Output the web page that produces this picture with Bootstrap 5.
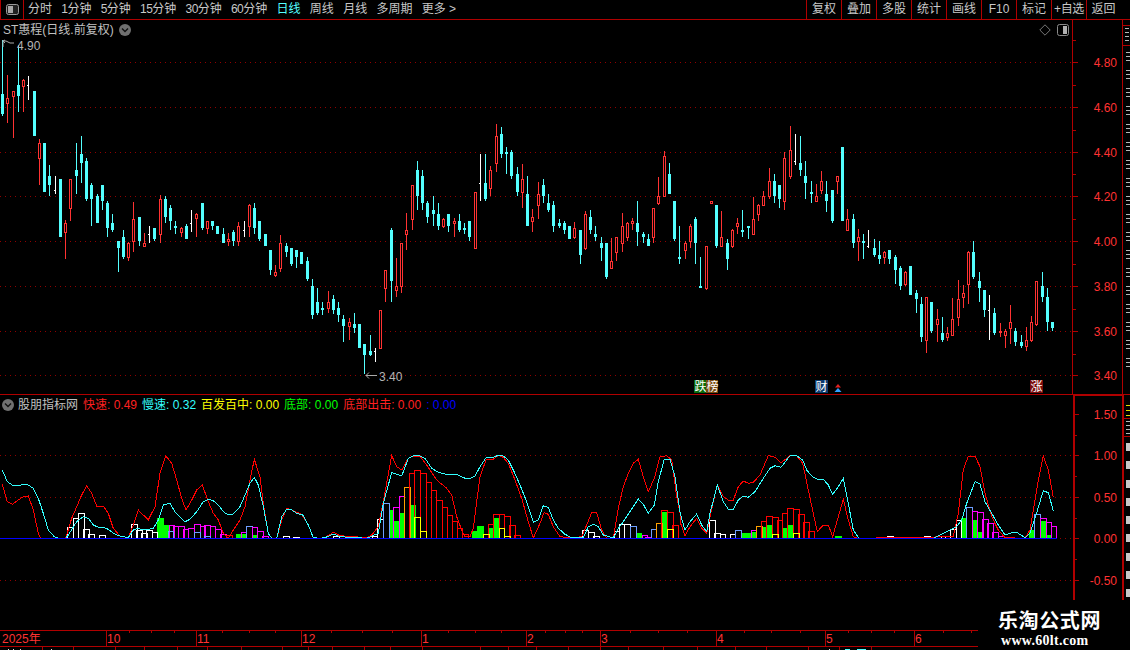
<!DOCTYPE html>
<html lang="zh-CN">
<head>
  <meta charset="UTF-8" />
  <meta name="viewport" content="width=device-width, initial-scale=1.0"/>
  <title>ST惠程 日线</title>
  <link href="https://cdn.jsdelivr.net/npm/bootstrap@5.3.3/dist/css/bootstrap.min.css" rel="stylesheet">
  <style>
    body { background: #000; overflow: hidden; }

    .chart-app {
      width: 1130px;
      height: 650px;
      overflow: hidden;
      background: #000;
      color: #c0c0c0;
      font: 12px/1 "Liberation Sans", "Noto Sans CJK SC", sans-serif;
    }

    .chart-app svg { display: block; flex-shrink: 0; }
    .chart-app svg text { font-family: "Liberation Sans", "Noto Sans CJK SC", sans-serif; font-size: 12px; }

    /* top toolbar */
    .tool-bar { height: 20px; border-bottom: 1px solid #b00000; }
    .tool-icon { width: 24px; height: 19px; border-left: 1px solid #b00000; border-right: 1px solid #b00000; }
    .tool-link { padding: 0; color: #c8c8c8; font-size: 12px; line-height: 19px; white-space: nowrap; }
    .tool-link:hover { color: #fff; }
    .tool-link.is-active { color: #54ffff; }
    .tool-links { margin-left: 4px; gap: 9.3px; }
    .tool-link .dg { letter-spacing: -.6px; }
    .tool-btn {
      width: 35px;
      height: 19px;
      padding: 0;
      border-left: 1px solid #b00000;
      color: #c8c8c8;
      font-size: 12px;
      line-height: 19px;
      text-align: center;
      white-space: nowrap;
    }
    .tool-btn.narrow { letter-spacing: -.3px; }
    .tool-btn:last-child { width: 44px; padding-right: 10px; }

    /* panes */
    .main-pane { height: 375px; border-bottom: 1px solid #b00000; }
    .sub-pane { height: 235px; }
    .plot-main { width: 1072px; }
    .plot-sub { width: 1073px; }
    .pane-head { height: 18px; padding: 2px 0 0 3px; white-space: nowrap; color: #c0c0c0; }
    .round-btn {
      width: 12px;
      height: 12px;
      border-radius: 50%;
      background: #707070;
      margin-left: 5px;
    }
    .head-icons { gap: 6px; margin-right: 2px; }
    .axis-main { width: 51px; border-left: 1px solid #b00000; border-right: 1px solid #b00000; }
    .axis-sub { width: 51px; border-left: 2px solid #b00000; border-right: 2px solid #b00000; border-top: 1px solid #b00000; }

    /* legend of the sub chart */
    .legend-row { height: 17px; padding-top: 3px; white-space: nowrap; gap: 5px; }
    .legend-row .round-btn { margin: 0 -1px 0 2px; }
    .legend-name { width: 60px; color: #c0c0c0; }
    .lg-red { color: #ff2020; }
    .lg-cyan { color: #33ffff; }
    .lg-yellow { color: #ffff00; }
    .lg-green { color: #00ff00; }
    .lg-blue { color: #0000ff; }

    /* column at the right edge: only slivers of its labels are on screen */
    .side-strip { flex: 1 1 auto; overflow: hidden; }
    .side-cell {
      border-bottom: 1px solid #b00000;
      background: repeating-linear-gradient(#b8b8b8 0 1px, transparent 1px 4px) 2px 2px / 4px 15px no-repeat;
    }
    .side-top { height: 21px; margin-top: 5px; border-top: 1px solid #b00000; }
    .side-yellow {
      height: 24px;
      background: repeating-linear-gradient(#e0e000 0 1px, transparent 1px 5px) 2px 10px / 4px 12px no-repeat;
    }
    .side-gray { height: 18px; }
    .side-dashes {
      height: 329px;
      background: repeating-linear-gradient(#b8b8b8 0 1px, transparent 1px 4px, #b8b8b8 4px 5px, transparent 5px 8px, #b8b8b8 8px 9px, transparent 9px 18px) 3px 6px / 4px 100% no-repeat;
    }
    .side-blocks {
      height: 200px;
      background: repeating-linear-gradient(#c8c8c8 0 8px, transparent 8px 18.3px) 2px 6px / 4px 100% no-repeat;
    }

    /* watermark over the corner */
    .mark-wrap { position: relative; }
    .water-mark {
      position: absolute;
      right: 0;
      bottom: 0;
      width: 152px;
      height: 50px;
      padding: 9px 0 0 20px;
      background: #000;
      color: #fff;
    }
    .water-name { font: 700 20px/22px "Noto Sans CJK SC", sans-serif; letter-spacing: .6px; }
    .water-url { font: 700 14px/15px "Liberation Serif", serif; margin: 2px 0 0 3px; letter-spacing: .3px; }
  </style>
</head>
<body>
  <div class="chart-app mark-wrap d-flex flex-column">

    <header class="tool-bar d-flex">
      <div class="tool-icon d-flex align-items-center justify-content-center">
        <svg width="13" height="11" viewBox="0 0 13 11"><rect x=".5" y=".5" width="12" height="10" rx="2" fill="#222" stroke="#9a9a9a"/><rect x="2" y="2" width="5" height="7" fill="#a8a8a8"/></svg>
      </div>
      <nav class="nav tool-links flex-nowrap">
        <a class="nav-link tool-link" href="#">分时</a>
        <a class="nav-link tool-link" href="#"><span class="dg">1</span>分钟</a>
        <a class="nav-link tool-link" href="#"><span class="dg">5</span>分钟</a>
        <a class="nav-link tool-link" href="#"><span class="dg">15</span>分钟</a>
        <a class="nav-link tool-link" href="#"><span class="dg">30</span>分钟</a>
        <a class="nav-link tool-link" href="#"><span class="dg">60</span>分钟</a>
        <a class="nav-link tool-link is-active" href="#">日线</a>
        <a class="nav-link tool-link" href="#">周线</a>
        <a class="nav-link tool-link" href="#">月线</a>
        <a class="nav-link tool-link" href="#">多周期</a>
        <a class="nav-link tool-link" href="#">更多 &gt;</a>
      </nav>
      <div class="d-flex ms-auto">
        <a class="nav-link tool-btn" href="#">复权</a>
        <a class="nav-link tool-btn" href="#">叠加</a>
        <a class="nav-link tool-btn" href="#">多股</a>
        <a class="nav-link tool-btn" href="#">统计</a>
        <a class="nav-link tool-btn" href="#">画线</a>
        <a class="nav-link tool-btn" href="#">F10</a>
        <a class="nav-link tool-btn" href="#">标记</a>
        <a class="nav-link tool-btn narrow" href="#">+自选</a>
        <a class="nav-link tool-btn" href="#">返回</a>
      </div>
    </header>

    <section class="main-pane d-flex">
      <div class="plot-main d-flex flex-column">
        <div class="pane-head d-flex align-items-center">
          <span>ST惠程(日线.前复权)</span>
          <span class="round-btn d-flex align-items-center justify-content-center">
            <svg width="8" height="6" viewBox="0 0 8 6"><path d="M1 1.5 4 4.5 7 1.5" fill="none" stroke="#111" stroke-width="1.4"/></svg>
          </span>
          <div class="head-icons d-flex align-items-center ms-auto">
            <svg width="12" height="12" viewBox="0 0 12 12"><path d="M6 .8 11.2 6 6 11.2 .8 6Z" fill="none" stroke="#777"/></svg>
            <svg width="13" height="12" viewBox="0 0 13 12"><rect x=".5" y=".5" width="11" height="11" rx="2" fill="none" stroke="#8a8a8a"/><rect x="6" y="2" width="4" height="8" fill="#b0b0b0"/></svg>
          </div>
        </div>
        <svg id="main-plot" width="1072" height="356" viewBox="0 38 1072 356"></svg>
      </div>
      <div class="axis-main">
        <svg id="main-axis" width="49" height="374" viewBox="1073 20 49 374"></svg>
      </div>
      <div class="side-strip">
        <div class="side-cell side-top"></div>
        <div class="side-dashes"></div>
      </div>
    </section>

    <section class="sub-pane d-flex">
      <div class="plot-sub d-flex flex-column">
        <div class="legend-row d-flex align-items-center">
          <span class="round-btn d-flex align-items-center justify-content-center">
            <svg width="8" height="6" viewBox="0 0 8 6"><path d="M1 1.5 4 4.5 7 1.5" fill="none" stroke="#111" stroke-width="1.4"/></svg>
          </span>
          <span class="legend-name">股朋指标网</span>
          <span class="lg-red">快速: 0.49</span>
          <span class="lg-cyan">慢速: 0.32</span>
          <span class="lg-yellow">百发百中: 0.00</span>
          <span class="lg-green">底部: 0.00</span>
          <span class="lg-red">底部出击: 0.00</span>
          <span class="lg-blue">: 0.00</span>
        </div>
        <svg id="sub-plot" width="1073" height="218" viewBox="0 412 1073 218"></svg>
      </div>
      <div class="axis-sub">
        <svg id="sub-axis" width="47" height="234" viewBox="1075 396 47 234"></svg>
      </div>
      <div class="side-strip">
        <div class="side-cell side-yellow"></div>
        <div class="side-cell side-gray"></div>
        <div class="side-blocks"></div>
      </div>
    </section>

    <svg id="time-axis" width="1130" height="20" viewBox="0 630 1130 20"></svg>

    <div class="water-mark">
      <div class="water-name">乐淘公式网</div>
      <div class="water-url">www.60lt.com</div>
    </div>
  </div>

  <script>
    const RED = "#ff3232", CYAN = "#54ffff", LINE = "#b00000", DOT = "#900000";

    // type, high, body top, body bottom, low (page pixels). white doji: high, tick, low
    const candles = [
      ['c',40,94,114,116],['r',75,98,104,123],['r',91,91,97,138],['c',45,85,96,112],['r',79,80,87,112],['w',76,85,100],['c',91,91,136,136],['r',139,143,159,185],
      ['c',143,143,192,192],['c',165,176,185,196],['w',176,190,194],['c',179,179,237,237],['r',220,223,233,259],['r',179,179,209,221],['c',143,170,176,194],['c',136,154,163,183],
      ['c',158,161,199,201],['c',183,185,199,226],['c',194,196,223,223],['c',185,185,201,210],['c',201,203,228,237],['c',214,223,230,232],['c',241,241,248,272],['c',230,237,257,259],
      ['r',242,243,258,261],['r',202,219,242,252],['c',217,217,241,246],['r',233,243,247,247],['w',226,234,243],['c',228,228,239,241],['r',195,199,235,243],['c',196,199,217,223],
      ['c',205,208,221,230],['c',221,226,228,234],['r',227,228,233,237],['c',224,226,239,239],['w',210,223,232],['r',213,214,219,237],['c',203,203,228,230],['r',221,221,229,234],
      ['c',221,221,226,230],['c',226,226,234,234],['c',228,234,243,243],['r',233,239,242,246],['c',230,232,241,246],['r',222,226,242,246],['w',221,230,237],['r',204,205,227,237],
      ['c',203,208,228,234],['c',221,221,239,241],['c',234,234,246,246],['c',250,250,270,275],['r',265,272,276,277],['r',235,243,269,272],['c',243,246,252,257],['c',248,248,264,266],
      ['c',250,250,257,268],['c',252,252,264,264],['c',257,261,279,281],['c',279,286,315,319],['c',288,302,313,315],['c',302,308,310,315],['r',291,302,309,313],['c',295,299,310,314],
      ['c',302,308,315,322],['c',315,319,326,342],['r',318,322,327,340],['c',313,324,328,333],['c',324,324,348,348],['c',344,344,355,374],['c',335,351,355,356],['w',348,351,362],
      ['r',310,310,349,349],['r',270,270,289,302],['c',228,230,281,302],['r',258,286,291,297],['r',243,243,287,293],['r',213,230,235,250],['r',185,185,220,230],['c',161,170,196,210],
      ['c',170,176,203,210],['c',201,203,217,223],['c',196,210,214,226],['c',203,214,226,230],['r',218,219,227,228],['c',214,214,226,232],['r',218,221,224,237],['c',214,221,230,232],
      ['c',223,228,230,234],['c',221,221,237,241],['r',192,192,249,249],['w',154,183,201],['c',154,183,199,201],['r',166,170,189,196],['r',124,136,164,172],['c',127,134,154,158],
      ['c',147,152,154,174],['c',150,152,176,179],['c',167,174,192,196],['r',164,179,193,208],['c',176,194,226,226],['r',209,217,222,232],['r',182,194,206,219],['c',179,185,196,203],
      ['c',194,203,210,212],['c',201,205,226,232],['c',219,223,226,228],['c',221,223,230,234],['c',226,226,239,239],['r',222,228,238,239],['c',230,230,255,264],['r',211,214,249,250],
      ['c',210,217,230,234],['c',226,234,237,241],['c',237,243,248,261],['c',243,243,277,279],['r',238,261,269,269],['r',237,237,253,261],['r',213,226,244,252],['r',222,223,238,241],
      ['r',218,221,224,230],['c',201,223,232,246],['c',232,234,237,243],['c',234,239,246,246],['r',208,208,238,243],['r',177,196,204,205],['r',151,156,197,197],['c',163,174,194,194],
      ['c',201,201,239,241],['c',226,257,259,264],['r',241,243,251,259],['r',224,226,242,248],['c',217,219,243,264],['c',257,286,288,288],['r',246,246,289,290],['r',201,201,204,204],
      ['c',205,205,246,248],['r',211,237,247,247],['c',239,243,259,270],['r',229,230,247,248],['r',218,223,227,234],['c',210,230,232,237],['c',226,226,228,239],['r',197,219,235,235],
      ['r',204,205,215,221],['r',191,196,206,206],['r',168,181,197,199],['c',174,181,196,203],['c',185,185,199,208],['r',152,158,202,210],['r',126,150,177,179],['w',134,161,165],
      ['c',136,163,170,176],['c',161,176,183,199],['c',181,192,194,203],['r',184,196,202,202],['r',171,181,191,194],['c',181,194,201,212],['c',190,190,221,223],['r',176,176,182,194],
      ['c',147,147,221,221],['r',209,219,231,231],['c',214,219,243,248],['r',229,237,242,261],['c',234,241,243,259],['w',230,246,248],['c',239,248,255,257],['c',241,255,259,264],
      ['r',251,252,258,264],['c',250,250,259,264],['c',255,257,270,284],['c',266,268,286,290],['r',271,272,285,286],['c',266,266,295,295],['c',290,293,299,313],['c',297,304,337,342],
      ['r',297,297,341,353],['c',302,302,331,333],['r',309,319,325,342],['c',317,333,340,342],['r',327,333,338,341],['r',298,319,336,336],['r',280,299,318,326],['r',285,293,298,308],
      ['r',251,252,285,304],['c',241,252,277,279],['c',272,281,288,302],['c',290,290,310,317],['w',295,310,340],['c',308,313,333,335],['r',323,331,333,337],['r',329,331,336,348],
      ['r',305,322,329,344],['c',328,331,342,346],['c',335,342,346,348],['r',327,340,347,351],['r',316,322,341,342],['r',281,281,325,326],['c',272,286,297,302],['c',288,297,322,331],
      ['c',322,322,328,331]
    ];

    // sub chart traces, written down in 3x crop coordinates: [x offset, y offset, points]
    const slowTrace = [
      [0,370,[7,300,22,335,37,345,55,348,70,343,85,345,100,355,115,385,130,430,145,480,163,500,178,505,197,505,205,495,230,455,250,440,265,445,280,465,295,472,310,472,325,478,340,490,355,497,385,503,400,480,415,475,430,480,445,478,460,475,475,450,490,405,510,400,525,425,540,442,555,455,570,448,590,425,610,395,625,388,640,392,655,405,670,425,685,435,700,432,720,410,735,375,750,340,763,322,775,345,790,410,805,490,815,505,830,505,845,440,860,418,875,420,890,430,908,435,925,465,940,503,960,505,975,503,1000,492,1020,500,1100,505,1135,490,1150,400,1175,308,1205,318,1225,265,1240,257,1260,258,1275,265,1295,295,1315,307,1340,313,1375,315,1395,325]],
      [470,445,[0,100,15,93,30,65,48,38,70,37,85,31,100,33,115,45,130,75,150,120,170,170,190,232,205,225,220,182,235,187,250,225,265,250,285,268,305,278,340,279,355,245,370,238,385,245,400,270,430,279,445,250,460,230,490,185,505,162,520,178,535,205,553,180,565,110,583,43,600,43,615,95,630,200]],
      [680,370,[0,428,15,480,30,455,50,432,65,465,80,485,90,430,112,345,130,395,145,418,160,418,175,390,190,378,205,382,225,365,250,325,270,295,285,287,303,292,330,257,350,257,368,270,380,300,395,318,415,330,430,328,445,345,458,373,475,350,490,325,505,400,520,480,537,505,760,505,830,470,845,450,860,400,885,335,900,342,915,395,935,430,955,465,975,495,1000,487,1010,487,1035,503,1050,490,1065,445,1090,362,1105,368,1120,422]]
    ];
    const fastTrace = [
      [0,370,[7,343,22,395,37,403,55,390,70,380,85,378,100,420,115,490,122,505,197,505,215,445,230,410,245,375,260,347,275,370,290,408,310,408,325,430,340,475,360,498,385,503,400,465,415,420,430,435,445,450,465,410,480,310,497,257,515,280,530,330,545,385,558,420,575,390,590,360,607,345,625,395,640,430,655,450,670,490,685,505,700,480,720,450,735,410,750,330,763,268,780,320,790,400,805,490,815,505,830,505,845,450,860,415,875,420,905,433,925,465,940,503,960,505,975,503,1000,487,1020,497,1100,503,1115,495,1135,470,1150,395,1175,257,1190,290,1205,300,1225,265,1240,258,1260,258,1280,285,1310,330,1340,355,1355,375,1370,440,1385,480,1395,500]],
      [470,445,[0,275,10,250,20,170,30,95,48,45,70,43,85,31,100,37,115,55,135,105,155,160,175,230,190,279,210,235,222,203,235,208,250,245,270,275,305,279,335,275,350,240,365,203,380,203,395,255,410,279,430,279,445,190,460,125,475,85,490,55,505,43,520,95,535,140,553,100,570,35,590,32,605,45,620,155,630,205]],
      [680,370,[0,455,15,497,30,470,50,445,65,475,80,490,90,440,112,343,130,380,145,390,160,390,175,350,190,333,205,340,220,337,240,315,265,257,285,262,303,278,330,257,350,257,368,280,385,360,400,430,412,485,430,465,445,465,458,500,475,440,490,388,505,450,520,500,535,505,820,500,835,430,850,300,865,258,885,258,900,290,915,370,935,440,955,480,975,503,1035,505,1050,480,1075,330,1090,258,1105,300,1120,382]]
    ];

    // histogram: filled green first, hollow ones over it. left, right, top in crop coordinates
    const GREEN = "#00ff00", MAG = "#ff00ff", BLUE = "#6f9fff", WHITE = "#ffffff", ORANGE = "#ffa000", YEL = "#ffff00", REDB = "#ff0000";
    const barGroups = [
      [0,370,[
        [GREEN,471,493,444],[GREEN,490,508,465],[GREEN,709,739,491],[GREEN,757,772,495],[GREEN,1168,1183,421],[GREEN,1183,1198,453],[GREEN,1198,1213,429],[GREEN,1231,1249,405],
        [WHITE,202,219,472],[WHITE,220,235,445],[WHITE,235,253,430],[WHITE,250,268,478],[WHITE,265,283,492],[WHITE,298,316,496],[WHITE,394,412,463],[WHITE,409,427,481],[WHITE,424,442,490],[WHITE,439,457,481],[WHITE,457,472,487],
        [MAG,506,521,466],[MAG,520,535,469],[MAG,535,553,469],[MAG,550,565,478],[MAG,565,583,475],[MAG,583,601,463],[MAG,601,616,469],[MAG,613,631,466],[MAG,631,646,469],[MAG,646,664,478],[MAG,661,679,493],[REDB,679,697,496],
        [BLUE,503,520,484],[BLUE,583,601,487],[BLUE,613,631,499],[MAG,724,739,487],[BLUE,739,757,469],[MAG,757,772,472],[MAG,772,790,484],[MAG,787,805,499],
        [WHITE,850,868,499],[WHITE,880,898,502],[WHITE,1000,1018,499],[WHITE,1040,1058,499],[WHITE,1058,1072,502],[WHITE,1117,1132,499],[WHITE,1132,1150,448],[BLUE,1150,1168,400],[MAG,1180,1198,412],[MAG,1198,1213,379],[ORANGE,1213,1231,352],
        [REDB,1228,1243,310],[REDB,1243,1261,301],[REDB,1261,1279,310],[REDB,1279,1294,337],[REDB,1294,1309,361],[REDB,1309,1327,391],[REDB,1327,1342,412],[REDB,1342,1357,436],[REDB,1357,1372,454],[REDB,1372,1387,475],[REDB,1387,1405,493],
        [YEL,1243,1261,442],[YEL,1261,1279,484]
      ]],
      [470,445,[
        [GREEN,6,21,259],[GREEN,21,42,243],[GREEN,54,69,250],[GREEN,69,90,219],[GREEN,499,517,265],[GREEN,574,595,202],
        [REDB,55,70,238],[REDB,70,87,208],[REDB,87,103,208],[REDB,103,121,214],[REDB,118,136,241],[REDB,133,151,271],[YEL,40,58,268],[YEL,87,103,250],[YEL,103,121,274],
        [WHITE,337,355,256],[WHITE,355,373,262],[WHITE,370,388,274],[WHITE,433,448,259],[WHITE,448,463,238],[WHITE,463,481,238],[BLUE,481,499,244],[MAG,517,532,271],[MAG,526,544,277],[BLUE,544,559,253],[ORANGE,559,577,235],
        [REDB,574,592,196],[REDB,592,610,202],[REDB,607,625,241],[YEL,592,610,253]
      ]],
      [680,370,[
        [GREEN,184,214,490],[GREEN,214,229,487],[GREEN,247,262,472],[GREEN,262,280,466],[GREEN,306,325,475],[GREEN,325,342,466],[GREEN,465,486,499],[GREEN,844,859,445],[GREEN,877,895,451],[GREEN,895,910,487],[GREEN,1047,1062,481],[GREEN,1083,1101,454],[GREEN,1101,1116,496],
        [WHITE,88,106,451],[WHITE,103,121,490],[WHITE,121,136,493],[WHITE,151,166,493],[BLUE,166,184,481],[MAG,214,229,481],[ORANGE,229,247,469],
        [REDB,244,259,454],[REDB,259,277,439],[REDB,277,295,442],[REDB,292,307,451],[REDB,307,322,430],[REDB,322,340,415],[REDB,340,358,418],[REDB,355,373,433],[REDB,370,388,457],[REDB,385,403,484],[YEL,277,295,493],[YEL,340,358,490],
        [WHITE,607,622,502],[WHITE,622,640,499],[WHITE,670,688,502],[WHITE,733,751,499],[WHITE,751,766,502],[WHITE,766,784,499],[WHITE,796,811,499],[WHITE,811,829,478],[WHITE,829,844,451],[BLUE,859,877,412],
        [MAG,877,892,424],[MAG,892,910,427],[MAG,907,925,448],[MAG,922,940,460],[MAG,937,955,487],[MAG,955,973,499],[MAG,982,1003,502],[BLUE,1062,1080,433],[MAG,1080,1098,445],[MAG,1098,1113,457],[MAG,1113,1128,469]
      ]]
    ];

    function rect(x, y, w, h, fill) {
      return `<rect x="${x}" y="${y}" width="${w}" height="${h}" fill="${fill}"/>`;
    }

    function dotted(y, w) {
      return `<line x1="0" x2="${w}" y1="${y + .5}" y2="${y + .5}" stroke="${DOT}" stroke-dasharray="1 4"/>`;
    }

    function renderCandles() {
      let out = "";
      [62, 107, 152, 196, 241, 286, 331, 375].forEach(y => out += dotted(y, 1072));
      candles.forEach((d, i) => {
        const x = Math.round(2 + i * 5.25);
        if (d[0] === 'w') {
          out += rect(x, d[1], 1, d[3] - d[1], "#fff") + rect(x - 1, d[2], 1, 1, "#fff");
        } else if (d[0] === 'c') {
          out += rect(x, d[1], 1, d[4] - d[1], CYAN) + rect(x - 1, d[2], 3, Math.max(d[3] - d[2], 1), CYAN);
        } else {
          out += rect(x, d[1], 1, d[4] - d[1], RED);
          out += `<rect x="${x - .5}" y="${d[2] + .5}" width="2" height="${Math.max(d[3] - d[2] - 1, 1)}" fill="#000" stroke="${RED}"/>`;
        }
      });
      // high / low markers
      out += `<path d="M3 40V47M3 41H6L10 43H14M3 41l2 -1M3 41l2 2" fill="none" stroke="#aaa"/>`;
      out += `<text x="17" y="50" fill="#b4b4b4">4.90</text>`;
      out += `<path d="M366 375.5H377M366 375.5l3 -3M366 375.5l3 3" fill="none" stroke="#aaa"/>`;
      out += `<text x="379" y="381" fill="#b4b4b4">3.40</text>`;
      // signal tags along the bottom
      [[694, "跌", "#0a6a0a"], [706, "榜", "#7a4a10"], [815, "财", "#0c3a6e"], [1030, "涨", "#7a0c0c"]].forEach(t => {
        out += rect(t[0], 380, t[2] === "#0c3a6e" || t[2] === "#7a0c0c" ? 13 : 12, 13, t[2]);
        out += `<text x="${t[0] + .5}" y="391" fill="#fff">${t[1]}</text>`;
      });
      out += `<path d="M838 384l3 3.5h-6Z" fill="#e02020"/><path d="M838 388l3.500 4h-7Z" fill="#30a0ff"/>`;
      document.getElementById("main-plot").innerHTML = out;
    }

    function tracePath(groups) {
      const pts = [];
      groups.forEach(g => {
        for (let k = 0; k < g[2].length; k += 2) {
          pts.push((g[0] + g[2][k] / 3).toFixed(1) + "," + (g[1] + g[2][k + 1] / 3).toFixed(1));
        }
      });
      return pts.join(" ");
    }

    function renderSub() {
      let out = "";
      [455, 497, 538, 580].forEach(y => out += dotted(y, 1073));
      barGroups.forEach(g => {
        g[2].forEach(b => {
          const l = Math.round(g[0] + b[1] / 3), r = Math.round(g[0] + b[2] / 3), t = Math.round(g[1] + b[3] / 3);
          if (b[0] === GREEN) out += rect(l, t, r - l, 538 - t, GREEN);
          else out += `<rect x="${l + .5}" y="${t + .5}" width="${r - l}" height="${538 - t}" fill="none" stroke="${b[0]}"/>`;
        });
      });
      out += `<polyline points="${tracePath(fastTrace)}" fill="none" stroke="#ff0000"/>`;
      out += `<polyline points="${tracePath(slowTrace)}" fill="none" stroke="#33ffff"/>`;
      out += rect(0, 538, 1057, 1, "#0000ff");
      const svg = document.getElementById("sub-plot");
      svg.setAttribute("shape-rendering", "crispEdges");
      svg.innerHTML = out;
    }

    function renderAxes() {
      let main = "";
      [[62, "4.80"], [107, "4.60"], [152, "4.40"], [196, "4.20"], [241, "4.00"], [286, "3.80"], [331, "3.60"], [375, "3.40"]].forEach(t => {
        main += rect(1073, t[0], 5, 1, LINE) + `<text x="1117" y="${t[0] + 5}" text-anchor="end" fill="${RED}">${t[1]}</text>`;
      });
      [40, 85, 130, 174, 219, 264, 309, 354].forEach(y => main += rect(1073, y, 3, 1, LINE));
      document.getElementById("main-axis").innerHTML = main;

      let sub = "";
      [[414, "1.50"], [455, "1.00"], [497, "0.50"], [538, "0.00"], [580, "-0.50"]].forEach(t => {
        sub += rect(1075, t[0], 4, 1, LINE) + `<text x="1117" y="${t[0] + 5}" text-anchor="end" fill="${RED}">${t[1]}</text>`;
      });
      [435, 476, 518, 559].forEach(y => sub += rect(1075, y, 2, 1, LINE));
      document.getElementById("sub-axis").innerHTML = sub;
    }

    function renderTime() {
      let out = rect(0, 630, 978, 1, LINE) + rect(0, 646, 978, 1, LINE);
      [[107, "10"], [197, "11"], [302, "12"], [422, "1"], [527, "2"], [601, "3"], [717, "4"], [826, "5"], [915, "6"]].forEach(t => {
        out += rect(t[0] - 1, 631, 1, 15, LINE) + `<text x="${t[0]}" y="643" fill="${RED}">${t[1]}</text>`;
      });
      out += `<text x="2" y="643" fill="${RED}">2025年</text>`;
      [129, 151, 174, 222, 249, 275, 331, 362, 392, 448, 475, 501, 545, 565, 582, 630, 658, 687, 744, 771, 800, 848, 871, 894, 943, 971].forEach(x => {
        out += rect(x, 631, 1, 2, LINE);
      });
      [42, 73, 115, 144, 177, 207, 241, 282, 308, 332, 364, 390, 422, 480, 508, 536, 568, 600, 628, 663, 697, 735, 766, 808, 839, 871].forEach(x => {
        out += rect(x, 647, 1, 3, LINE);
      });
      // tops of the row below, the rest is off screen
      [8, 13, 20, 51, 829].forEach(x => out += rect(x, 649, 1, 1, "#ddd"));
      out += rect(845, 649, 5, 1, CYAN) + rect(857, 649, 9, 1, CYAN);
      document.getElementById("time-axis").innerHTML = out;
    }

    renderCandles();
    renderSub();
    renderAxes();
    renderTime();
  </script>
  <script src="https://cdn.jsdelivr.net/npm/bootstrap@5.3.3/dist/js/bootstrap.bundle.min.js"></script>
</body>
</html>
